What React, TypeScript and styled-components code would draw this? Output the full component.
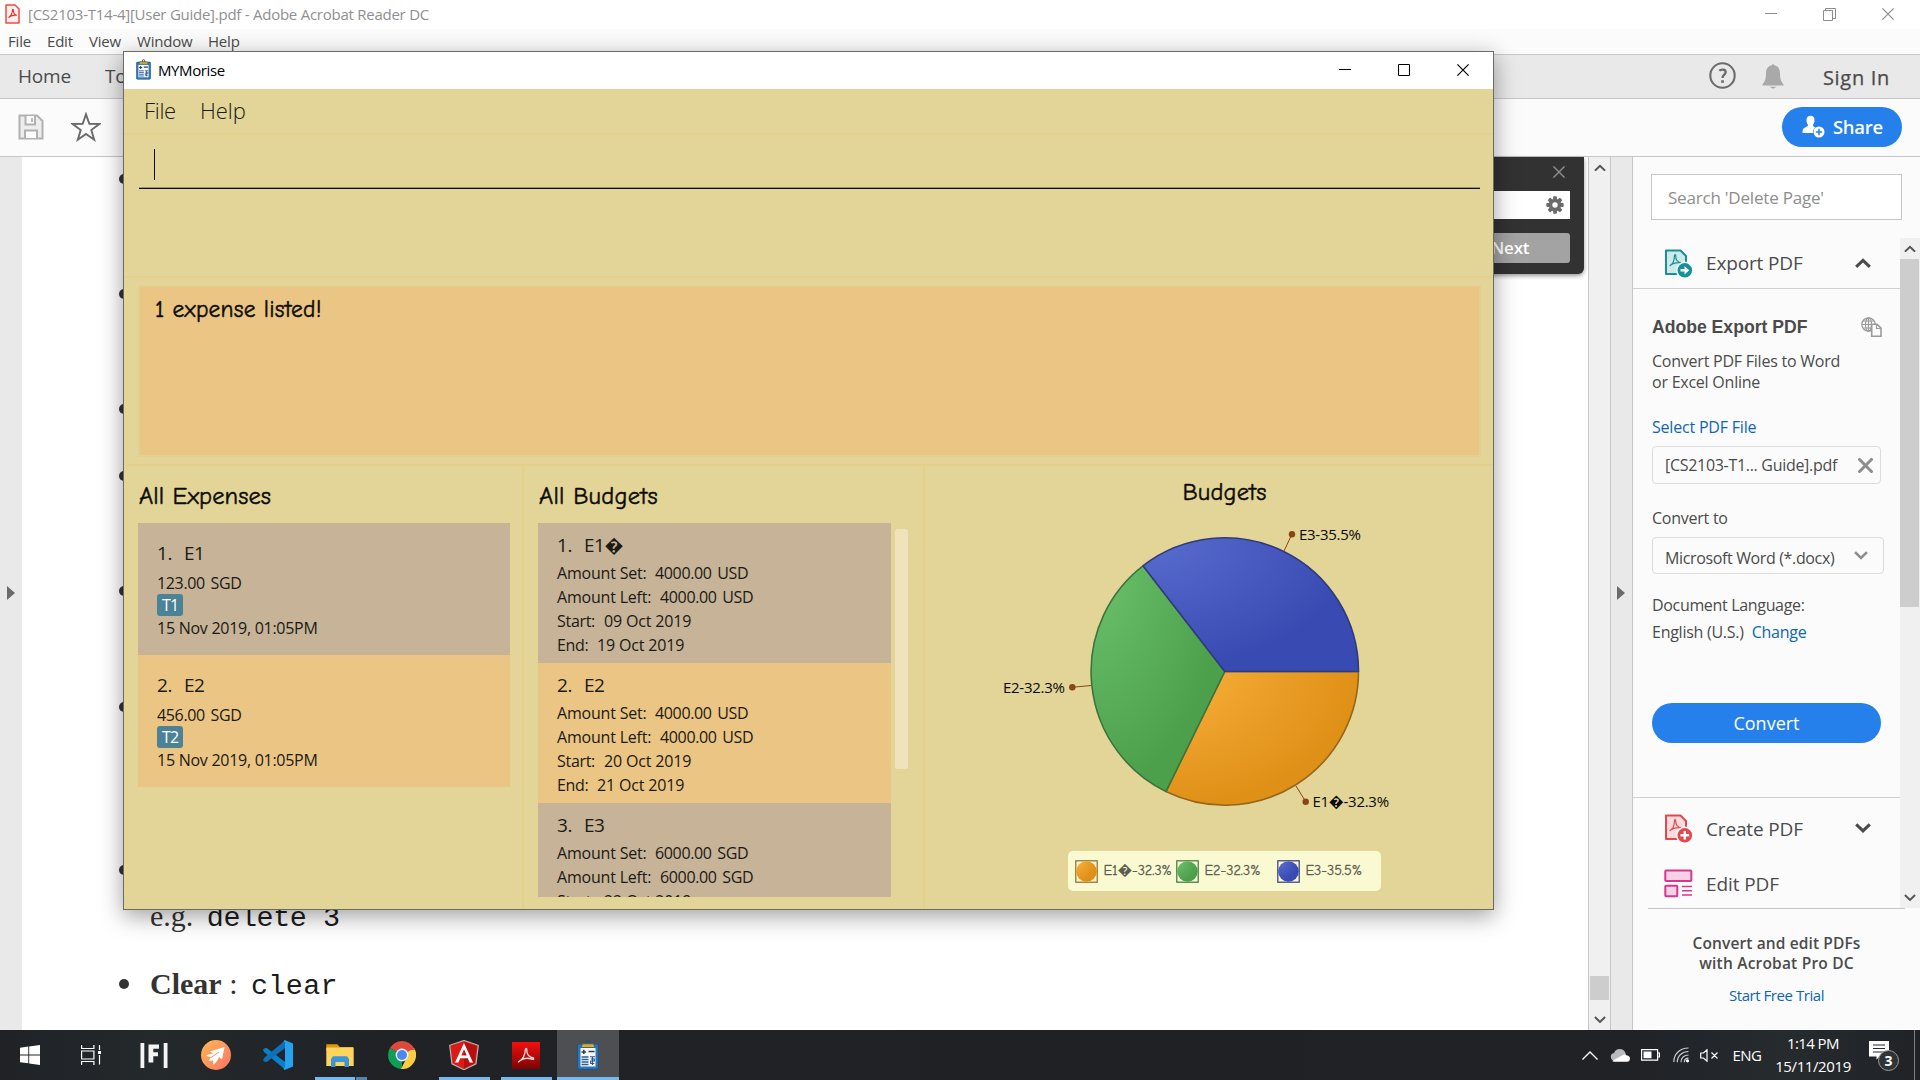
import React from 'react';
import styled, { createGlobalStyle } from 'styled-components';

const UI = '"Open Sans", "Segoe UI", "Noto Sans", sans-serif';
const COMIC = '"Comic Neue", "Comic Sans MS", "Open Sans", sans-serif';

const Global = createGlobalStyle`
  * { box-sizing: border-box; }
  html, body { margin: 0; padding: 0; overflow: hidden; }
  body { font-family: ${UI}; color: #4b4b4b; }
  svg { display: block; flex: none; }
  p, h2, h3, ul { margin: 0; padding: 0; font-weight: 400; }
`;

const Screen = styled.div`
  position: relative;
  display: flex;
  flex-direction: column;
  width: 1920px;
  height: 1080px;
  overflow: hidden;
  background: #fff;
`;

const Label = styled.span<{ $size?: number; $track?: number; $weight?: number; $color?: string; $width?: number; $word?: number }>`
  display: block;
  flex: none;
  white-space: pre;
  font-size: ${p => p.$size ?? 15}px;
  letter-spacing: ${p => p.$track ?? -0.2}px;
  word-spacing: ${p => p.$word ?? 0}px;
  font-weight: ${p => p.$weight ?? 400};
  color: ${p => p.$color ?? 'inherit'};
  width: ${p => (p.$width ? `${p.$width}px` : 'auto')};
`;

/* ---------- Acrobat Reader ---------- */

const ReaderTitle = styled.header`
  display: flex;
  align-items: center;
  flex: none;
  height: 29px;
  padding: 0 26px 1px 5px;
  line-height: 29px;
`;
const TitleText = styled.div`
  margin-left: 8px;
  flex: 1;
`;
const Controls = styled.div<{ $gap: number }>`
  display: flex;
  align-items: center;
  gap: ${p => p.$gap}px;
`;
const ReaderMenu = styled.nav`
  display: flex;
  flex: none;
  height: 26px;
  padding-left: 8px;
  line-height: 25px;
  background: #fbfbfb;
  border-bottom: 1px solid #c6c6c6;
`;
const TabStrip = styled.div`
  display: flex;
  align-items: center;
  height: 44px;
  flex: none;
  padding: 0 30px 2px 18px;
  line-height: 42px;
  background: #e9e9e9;
  border-bottom: 1px solid #c6c6c6;
`;
const Spacer = styled.div`
  flex: 1;
`;
const TabIcons = styled.div`
  display: flex;
  align-items: center;
  gap: 26px;
  margin-right: 39px;
`;
const SignIn = styled.div`
  padding-top: 4px;
  -webkit-text-stroke: 0.25px #4b4b4b;
`;
const ToolStrip = styled.div`
  display: flex;
  align-items: center;
  gap: 27px;
  height: 58px;
  flex: none;
  padding: 0 18px 2px 18px;
  background: #fbfbfb;
  border-bottom: 1px solid #c6c6c6;
`;
const ShareButton = styled.button`
  display: flex;
  align-items: center;
  gap: 8px;
  width: 120px;
  height: 40px;
  padding: 0 0 0 20px;
  border: 0;
  border-radius: 20px;
  background: #2680eb;
  color: #fff;
  font-family: ${UI};
`;

const ReaderBody = styled.main`
  display: flex;
  height: 873px;
  flex: none;
`;
const LeftStrip = styled.aside`
  display: flex;
  align-items: center;
  width: 22px;
  padding: 0 0 1px 7px;
  background: #e9e9e9;
`;
const RightStrip = styled(LeftStrip)`
  width: 22px;
  padding-left: 6px;
  border-left: 1px solid #c6c6c6;
`;
const Page = styled.section`
  flex: 1;
  background: #fff;
`;
const List = styled.ul`
  padding: 4px 0 0 97px;
  list-style: none;
`;
const Item = styled.li<{ $height: number }>`
  display: flex;
  gap: 21px;
  height: ${p => p.$height}px;
  font: 30px/36px "Liberation Serif", "Times New Roman", serif;
  color: #333;
`;
const Bullet = styled.i`
  flex: none;
  width: 10px;
  height: 10px;
  margin-top: 13px;
  border-radius: 50%;
  background: #333;
`;
const Line = styled.p`
  height: 36px;
  white-space: pre;
  margin-bottom: 10px;
`;
const Code = styled.code<{ $track: number }>`
  margin-left: 6px;
  font: 28.4px/36px "Liberation Mono", "Courier New", monospace;
  letter-spacing: ${p => p.$track}px;
  color: #1c1c1c;
`;

const Scroll = styled.div<{ $width: number; $edge?: boolean }>`
  display: flex;
  flex-direction: column;
  align-items: flex-start;
  flex: none;
  width: ${p => p.$width}px;
  padding-left: ${p => (p.$edge ? '1px' : '0')};
  background: #f0f0f0;
  border-left: ${p => (p.$edge ? '1px solid #c6c6c6' : '0')};
`;
const ScrollArrow = styled.div`
  display: grid;
  place-items: center;
  height: 21px;
  width: 19px;
`;
const Thumb = styled.div<{ $top: number; $height: number }>`
  width: 19px;
  height: ${p => p.$height}px;
  margin-top: ${p => p.$top}px;
  background: #cdcdcd;
`;

const FindBar = styled.div`
  position: absolute;
  left: 1300px;
  top: 157px;
  display: flex;
  flex-direction: column;
  width: 284px;
  height: 117px;
  padding: 8px 14px 11px;
  background: #323232;
  border-radius: 0 0 6px 6px;
  box-shadow: 0 2px 4px rgba(0, 0, 0, 0.4);
`;
const FindTop = styled.div`
  display: flex;
  justify-content: flex-end;
  padding: 1px 5px 0 0;
  height: 26px;
`;
const FindInput = styled.div`
  display: flex;
  align-items: center;
  justify-content: flex-end;
  height: 28px;
  padding-right: 6px;
  background: #fff;
`;
const FindNext = styled.div`
  align-self: flex-end;
  width: 104px;
  height: 30px;
  margin-top: 14px;
  padding-left: 25px;
  line-height: 30px;
  border-radius: 3px;
  background: #a3a3a3;
  color: #fff;
`;

/* ---------- Tools pane ---------- */

const Pane = styled.aside`
  display: flex;
  flex-direction: column;
  width: 288px;
  background: #fbfbfb;
  border-left: 1px solid #c6c6c6;
`;
const Search = styled.div`
  flex: none;
  width: 251px;
  height: 46px;
  margin: 17px 0 18px 18px;
  padding-left: 16px;
  line-height: 46px;
  background: #fff;
  border: 1px solid #c6c6c6;
`;
const PaneScroller = styled.div`
  display: flex;
  height: 670px;
  flex: none;
`;
const PaneContent = styled.div`
  flex: 1;
  min-width: 0;
  display: flex;
  flex-direction: column;
`;
const ToolRow = styled.div<{ $height: number; $line?: boolean }>`
  display: flex;
  align-items: center;
  flex: none;
  height: ${p => p.$height}px;
  padding: 0 29px 0 31px;
  border-bottom: ${p => (p.$line ? '1px solid #d0d0d0' : '0')};
`;
const ToolName = styled.div`
  flex: 1;
  margin-left: 13px;
`;
const ExportForm = styled.div`
  display: flex;
  flex-direction: column;
  height: 510px;
  padding: 26px 16px 0 19px;
  line-height: 21px;
  border-bottom: 1px solid #d0d0d0;
`;
const Heading = styled.h3`
  display: flex;
  justify-content: space-between;
  align-items: center;
  height: 24px;
  margin-bottom: 12px;
  padding-right: 2px;
  font: 700 17.6px/24px "Liberation Sans", Arial, sans-serif;
`;
const Block = styled.div<{ $after: number }>`
  display: flex;
  gap: 8px;
  margin-bottom: ${p => p.$after}px;
`;
const Field = styled.div<{ $width: number; $height: number; $after: number; $drop?: number; $right?: number }>`
  display: flex;
  align-items: center;
  justify-content: space-between;
  flex: none;
  width: ${p => p.$width}px;
  height: ${p => p.$height}px;
  margin-bottom: ${p => p.$after}px;
  padding: 0 ${p => p.$right ?? 7}px 0 12px;
  border: 1px solid #dcdcdc;
  border-radius: 4px;
  > span { padding-top: ${p => p.$drop ?? 0}px; }
`;
const FormLine = styled(Block)<{ $before: number }>`
  margin-top: ${p => p.$before}px;
`;
const ConvertButton = styled.button`
  flex: none;
  width: 229px;
  height: 40px;
  padding: 0;
  margin-top: 60px;
  border: 0;
  border-radius: 20px;
  background: #2680eb;
  color: #fff;
  font: 18px/38px ${UI};
`;
const Promo = styled.footer`
  width: 257px;
  margin-left: 15px;
  padding: 24px 0 0 0;
  border-top: 1px solid #c6c6c6;
  text-align: center;
  line-height: 20px;
`;
const Trial = styled.div`
  margin-top: 12px;
`;

/* ---------- MYMorise window ---------- */

const AppWindow = styled.section`
  position: absolute;
  left: 123px;
  top: 51px;
  display: flex;
  flex-direction: column;
  width: 1371px;
  height: 859px;
  border: 1px solid #6b6a64;
  background: #e2d597;
  color: #1c1a14;
  box-shadow: 0 6px 22px rgba(0, 0, 0, 0.38);
`;
const AppTitle = styled.header`
  display: flex;
  align-items: center;
  flex: none;
  height: 37px;
  padding: 0 24px 2px 12px;
  line-height: 37px;
  background: #fff;
  color: #000;
`;
const AppName = styled.div`
  flex: 1;
  margin-left: 7px;
  padding-top: 1px;
`;
const AppMenu = styled.nav`
  display: flex;
  gap: 24px;
  flex: none;
  height: 46px;
  padding-left: 20px;
  line-height: 43px;
  border-bottom: 2px solid #e3d28b;
`;
const CommandArea = styled.div`
  flex: none;
  height: 143px;
  padding: 0 13px 0 15px;
  border-bottom: 2px solid #e3d08a;
`;
const CommandField = styled.div`
  height: 54px;
  padding: 14px 0 0 15px;
  border-bottom: 1px solid #0c0b06;
  box-shadow: inset 0 -1px 0 #9f9763;
`;
const Caret = styled.i`
  display: block;
  width: 1px;
  height: 31px;
  background: #111;
`;
const ResultArea = styled.div`
  flex: none;
  height: 188px;
  padding: 7px 12px 7px 14px;
  border-bottom: 2px solid #e3d08a;
`;
const ResultBox = styled.div`
  height: 172px;
  padding: 4px 0 0 14px;
  border: 2px solid #e3d090;
  background: #ebc583;
`;
const Comic = styled.h2<{ $size: number; $track: number }>`
  padding-left: 1px;
  font: 400 ${p => p.$size}px/38px ${COMIC};
  letter-spacing: ${p => p.$track}px;
  white-space: pre;
  color: #0c0b08;
  -webkit-text-stroke: 0.45px #0c0b08;
`;
const Columns = styled.div`
  display: flex;
  flex: 1;
  min-height: 0;
`;
const Column = styled.div<{ $width: number }>`
  display: flex;
  flex-direction: column;
  flex: none;
  width: ${p => p.$width}px;
  padding: 0 12px 12px 14px;
  border-right: 2px solid #e3d08a;
`;
const ColumnHead = styled.div`
  flex: none;
  height: 57px;
  padding-top: 11px;
`;
const CardScroller = styled.div`
  display: flex;
  flex: 1;
  min-height: 0;
  overflow: hidden;
`;
const Cards = styled.div<{ $width: number }>`
  flex: none;
  width: ${p => p.$width}px;
`;
const Card = styled.article<{ $even?: boolean; $height: number; $top: number }>`
  height: ${p => p.$height}px;
  padding: ${p => p.$top}px 0 0 19px;
  background: ${p => (p.$even ? '#ebc583' : '#c6b398')};
`;
const CardTitle = styled.div<{ $after: number }>`
  display: flex;
  height: 26px;
  line-height: 26px;
  margin-bottom: ${p => p.$after}px;
`;
const CardLine = styled.div`
  display: flex;
  height: 24px;
  line-height: 24px;
`;
const Tag = styled.div`
  width: max-content;
  height: 22px;
  margin-top: -1px;
  padding: 0 5px;
  line-height: 22px;
  border-radius: 3px;
  background: #4c8295;
  color: #fff;
`;
const CardThumb = styled.div`
  flex: none;
  width: 13px;
  height: 240px;
  margin: 6px 0 0 4px;
  border-radius: 3px;
  background: #eee3ba;
`;
const ChartColumn = styled.div`
  display: flex;
  flex-direction: column;
  align-items: center;
  flex: 1;
  padding: 7px 0 0 30px;
`;
const ChartSpace = styled.div`
  padding: 4px 0 6px;
`;
const Legend = styled.div`
  display: flex;
  align-items: center;
  width: 313px;
  height: 40px;
  padding-left: 7px;
  border-radius: 5px;
  background: #fafad2;
`;
const LegendItem = styled.div`
  display: flex;
  align-items: center;
  gap: 6px;
  width: 101px;
`;
const LegendText = styled.span`
  font: 400 14.3px/20px ${COMIC};
  letter-spacing: -0.05px;
  white-space: pre;
  color: #5d5c50;
  -webkit-text-stroke: 0.3px #5d5c50;
`;
const ChartLabel = styled.text`
  font: 15px ${UI};
  letter-spacing: -0.28px;
  fill: #0a0a0a;
`;

/* ---------- Taskbar ---------- */

const Taskbar = styled.footer`
  display: flex;
  flex: none;
  height: 50px;
  background: linear-gradient(90deg, #202226, #24292c 8%, #202226 20%, #1f2125 60%, #202226 85%, #262b2e 93%, #202226);
  color: #fff;
`;
const Launcher = styled.div<{ $width?: number; $active?: boolean; $bar?: number; $extra?: boolean }>`
  display: grid;
  place-items: center;
  width: ${p => p.$width ?? 62}px;
  background-color: ${p => (p.$active ? '#4e4f53' : 'transparent')};
  background-image: ${p =>
    p.$bar
      ? `linear-gradient(#76b9ed, #76b9ed)${p.$extra ? ', linear-gradient(#5186ae, #5186ae)' : ''}`
      : 'none'};
  background-size: ${p => p.$bar}px 3px${p => (p.$extra ? ', 11px 3px' : '')};
  background-position: ${p => (p.$extra ? '6px 100%, 47px 100%' : '50% 100%')};
  background-repeat: no-repeat;
`;
const Tray = styled.div`
  display: flex;
  align-items: center;
  margin-left: auto;
  padding-right: 5px;
`;
const TrayCell = styled.div<{ $width: number }>`
  display: grid;
  place-items: center;
  width: ${p => p.$width}px;
`;
const Clock = styled.div`
  display: flex;
  flex-direction: column;
  align-items: center;
  width: 82px;
  line-height: 23px;
`;
const ShowDesktop = styled.div`
  width: 1px;
  height: 50px;
  background: #7c7e80;
`;

/* ---------- Icons ---------- */

const Close = ({ s = 12, c = '#000', w = 1.2 }: { s?: number; c?: string; w?: number }) => (
  <svg width={s} height={s} viewBox="0 0 12 12"><path d="M.4.4 11.6 11.6M11.6.4.4 11.6" stroke={c} strokeWidth={w} fill="none" /></svg>
);
const Minimize = ({ c }: { c: string }) => (
  <svg width="12" height="12"><path d="M0 5.5h12" stroke={c} /></svg>
);
const Chevron = ({ up, w = 16, s = 3, c = '#4b4b4b' }: { up?: boolean; w?: number; s?: number; c?: string }) => (
  <svg width={w} height={w * 0.64} viewBox="0 0 16 10"><path d={up ? 'M1.2 8.8 8 2.2l6.8 6.6' : 'M1.2 1.2 8 7.8l6.8-6.6'} stroke={c} strokeWidth={s} fill="none" /></svg>
);
const Triangle = () => (
  <svg width="9" height="14"><path d="M0 0 8 7 0 14z" fill="#6b6b6b" /></svg>
);
const Trefoil = 'M6.5 16.5c3-1.3 4.700-5.800 4.800-10.200 0-1.300 1.300-1.200 1.200 0-.2 3.800 2.200 6.700 6 7.300-4.600-.6-9 .4-12 2.900z';
const PdfIcon = () => (
  <svg width="15" height="20" viewBox="0 0 15 20">
    <path d="M1 1h9l4 4v14H1z" fill="#fff0ef" stroke="#f04a45" strokeWidth="1.5" strokeLinejoin="round" />
    <path d="M3.500 13.500c2-.8 4-4.500 4-7.500 0-.9.900-.9.800 0 0 2.600 1.400 4.800 3.600 5.200-3-.3-6 .4-8.400 2.300z" fill="none" stroke="#e8332d" strokeWidth="1.1" />
  </svg>
);
const Clipboard = ({ w, h }: { w: number; h: number }) => (
  <svg width={w} height={h} viewBox="0 0 22 30">
    <rect x=".6" y="4" width="20.800" height="25.400" rx="1.800" fill="#2a76b8" stroke="#1c4f80" strokeWidth=".8" />
    <rect x="3.500" y="8" width="15" height="18.500" fill="#f6f8fa" />
    <circle cx="11" cy="2.600" r="1.900" fill="none" stroke="#26506f" strokeWidth="1.400" />
    <path d="M5.500 3.800h11l1.500 3.700H4z" fill="#d9ad2b" stroke="#355d6e" strokeWidth=".8" />
    <path d="M4.500 12h4.600M6.800 9.800v4.300M11.500 11.500h6" stroke="#22416a" strokeWidth="1.500" />
    <path d="M4.500 17h7M4.500 19.500h7M4.500 22h7M4.500 24.500h7" stroke="#2f5f94" strokeWidth="1.300" />
    <path d="M13 16.700h5M15.500 17v8M13.700 19h3.600v2h-3.600v2.500h3.600" stroke="#2b5588" strokeWidth="1.100" fill="none" />
  </svg>
);
const SaveIcon = () => (
  <svg width="26" height="26" viewBox="0 0 26 26" fill="none" stroke="#b1b1b1" strokeWidth="2">
    <path d="M1.500 1.500h17.500l5.500 5.500v17.500h-23z" fill="#ededed" />
    <path d="M7.500 2v8.500h9.500V2" fill="#fbfbfb" /><path d="M14 4v4" strokeWidth="1.800" />
    <path d="M7 24v-7.500h12V24" fill="#fbfbfb" />
  </svg>
);
const StarIcon = () => (
  <svg width="30" height="30" viewBox="0 0 30 30"><path d="M15 2.200l3.300 9.600 10 .2-8 6.100 2.900 9.600-8.200-5.700-8.200 5.700 2.900-9.600-8-6.100 10-.2z" fill="none" stroke="#6b6b6b" strokeWidth="1.900" /></svg>
);
const HelpIcon = () => (
  <svg width="27" height="27" viewBox="0 0 27 27" fill="none" stroke="#6b6b6b">
    <circle cx="13.500" cy="13.500" r="12.200" strokeWidth="2.100" />
    <path d="M10.300 8.800c1.500-1.700 6.400-1.800 6.400 1.300 0 2.500-3.200 2.500-3.200 5.900" strokeWidth="2.300" /><path d="M12.200 18.300h2.700v2.500h-2.700z" fill="#6b6b6b" stroke="none" />
  </svg>
);
const BellIcon = () => (
  <svg width="22" height="26" viewBox="0 0 22 26" fill="#a9a9a9"><path d="M9.600 2.200a1.500 1.500 0 0 1 2.800 0c4 1 5.600 4 5.600 8 0 6 1 8 3.500 11v1.300H.5v-1.300c2.500-3 3.500-5 3.500-11 0-4 1.600-7 5.600-8zM7.500 23.700h7L11 25.800z" /></svg>
);
const ShareIcon = () => (
  <svg width="23" height="23" viewBox="0 0 23 23">
    <path d="M8.500.8c2.800 0 4 1.800 4 4.400 0 2-.7 3.400-1.500 4.600 0 1.600.6 2 2.500 2.900-2 1.300-2.600 2.600-2.600 5.300H.5c0-3.500.5-4.700 2.500-5.500 2.500-1 3-1.200 3-2.700C5.200 8.600 4.500 7.200 4.500 5.200 4.500 2.600 5.700.8 8.500.8z" fill="#fff" />
    <circle cx="17" cy="17" r="5.500" fill="#fff" /><path d="M17 13.800v6.400M13.800 17h6.400" stroke="#2680eb" strokeWidth="1.500" />
  </svg>
);
const Gear = () => (
  <svg width="18" height="18" viewBox="-9 -9 18 18">
    <g fill="#6b6b6b">{[0, 45, 90, 135].map(a => <rect key={a} x="-1.900" y="-8.700" width="3.800" height="17.400" rx=".8" transform={`rotate(${a})`} />)}<circle r="6.300" /></g>
    <circle r="2.700" fill="#fff" />
  </svg>
);
const PdfTool = ({ c, f, plus }: { c: string; f: string; plus?: boolean }) => (
  <svg width="29" height="29" viewBox="0 0 29 29">
    <path d="M2 1.500h14.500L22 7v18H2z" fill={f} stroke={c} strokeWidth="2" strokeLinejoin="round" />
    <path d={Trefoil} transform="translate(-.8 .3)" fill="none" stroke={c} strokeWidth="1.200" />
    <circle cx="20.800" cy="21.300" r="8" fill={c} stroke="#fbfbfb" strokeWidth="1.400" />
    {plus ? <path d="M20.800 17v8.600M16.500 21.300h8.600" stroke="#fff" strokeWidth="2.400" /> : <path d="M16.500 20h4v-2.800l4.800 4.100-4.800 4.100v-2.800h-4z" fill="#fff" />}
  </svg>
);
const EditTool = () => (
  <svg width="29" height="29" viewBox="0 0 29 29" stroke="#d83790" fill="#f6d2e6" strokeWidth="2">
    <rect x="1.300" y="1.500" width="26" height="10.500" rx=".8" /><rect x="1.300" y="16.800" width="12" height="10.500" rx=".8" />
    <path d="M18 17.500h10M18 21.800h10M18 26h10" strokeWidth="1.400" />
  </svg>
);
const GlobePage = () => (
  <svg width="21" height="20" viewBox="0 0 21 20" fill="none" stroke="#9a9a9a" strokeWidth="1.200">
    <circle cx="7.500" cy="7.500" r="6.700" /><ellipse cx="7.500" cy="7.500" rx="3" ry="6.700" /><path d="M7.500.8v13.400M.8 7.500h13.400M2 4h11M2 11h11" />
    <path d="M10.700 7.200h5.300l4 4v8h-9.300z" fill="#fbfbfb" strokeWidth="1.600" /><path d="M15.500 7.500v4h4.300" />
  </svg>
);

/* ---------- Data ---------- */

const expenses = [
  { n: '1.', name: 'E1', amount: '123.00 SGD', tag: 'T1' },
  { n: '2.', name: 'E2', amount: '456.00 SGD', tag: 'T2' },
];
const budgets = [
  { n: '1.', name: 'E1\uFFFD', amount: '4000.00 USD', start: '09 Oct 2019', end: '19 Oct 2019' },
  { n: '2.', name: 'E2', amount: '4000.00 USD', start: '20 Oct 2019', end: '21 Oct 2019' },
  { n: '3.', name: 'E3', amount: '6000.00 SGD', start: '22 Oct 2019', end: '' },
];
const slices = [
  { id: 'e1', label: 'E1\uFFFD-32.3%', share: 10 / 31, light: '#fab13d', dark: '#df9017', edge: '#96661c' },
  { id: 'e2', label: 'E2-32.3%', share: 10 / 31, light: '#6dc26d', dark: '#4ca04b', edge: '#3c743a' },
  { id: 'e3', label: 'E3-35.5%', share: 11 / 31, light: '#5a6dd0', dark: '#394bb2', edge: '#303b7c' },
];
const bullets = [115, 115, 67, 115, 116, 163];

const CX = 1224.8;
const CY = 671.5;
const R = 133.7;

function Pie() {
  let a = 0;
  return (
    <svg width="537" height="330" viewBox="956 515 537 330">
      <defs>
        {slices.map(s => (
          <radialGradient key={s.id} id={s.id} cx="0" cy="0" r="1" fx="0" fy="0">
            <stop offset="0" stopColor={s.light} /><stop offset="1" stopColor={s.dark} />
          </radialGradient>
        ))}
      </defs>
      {slices.map(s => {
        const b = a + s.share * Math.PI * 2;
        const d = `M${CX} ${CY}L${CX + R * Math.cos(a)} ${CY + R * Math.sin(a)}A${R} ${R} 0 0 1 ${CX + R * Math.cos(b)} ${CY + R * Math.sin(b)}Z`;
        a = b;
        return <path key={s.id} d={d} fill={`url(#${s.id})`} stroke={s.edge} strokeWidth="1.600" strokeLinejoin="round" />;
      })}
      <g stroke="#8b4513" fill="#8b4513">
        <path d="M1284 551l8-17M1091 685.500l-19 1.800M1296 786l9.700 15.700" />
        <g stroke="none"><circle cx="1292" cy="534.300" r="3.200" /><circle cx="1072.300" cy="687.300" r="3.200" /><circle cx="1305.700" cy="801.700" r="3.200" /></g>
      </g>
      <ChartLabel x="1299" y="540">E3-35.5%</ChartLabel>
      <ChartLabel x="1003" y="693">E2-32.3%</ChartLabel>
      <ChartLabel x="1312.500" y="807">{'E1\uFFFD-32.3%'}</ChartLabel>
    </svg>
  );
}

export default function App() {
  return (
    <Screen>
      <Global />
      <ReaderTitle>
        <PdfIcon />
        <TitleText><Label $track={-0.25} $color="#8f8f8f">[CS2103-T14-4][User Guide].pdf - Adobe Acrobat Reader DC</Label></TitleText>
        <Controls $gap={46}>
          <Minimize c="#8c8c8c" />
          <svg width="13" height="13" fill="none" stroke="#8c8c8c"><path d="M.5 2.500h9v10h-9zM2.500 2.500v-2h10v10h-3" /></svg>
          <Close c="#8c8c8c" />
        </Controls>
      </ReaderTitle>
      <ReaderMenu>
        <Label $width={39}>File</Label><Label $width={42}>Edit</Label><Label $width={48}>View</Label><Label $width={71}>Window</Label><Label>Help</Label>
      </ReaderMenu>
      <TabStrip>
        <Label $size={19} $width={87}>Home</Label><Label $size={19}>To</Label>
        <Spacer />
        <TabIcons><HelpIcon /><BellIcon /></TabIcons>
        <SignIn><Label $size={20} $track={0.7}>Sign In</Label></SignIn>
      </TabStrip>
      <ToolStrip>
        <SaveIcon /><StarIcon />
        <Spacer />
        <ShareButton><ShareIcon /><Label $size={18.5} $track={-0.3} $weight={600}>Share</Label></ShareButton>
      </ToolStrip>

      <ReaderBody>
        <LeftStrip><Triangle /></LeftStrip>
        <Page>
          <List>
            {bullets.map((h, i) => <Item key={i} $height={h}><Bullet /></Item>)}
            <Item $height={114}>
              <Bullet />
              <div><Line /><Line>e.g. <Code $track={-0.45}>delete 3</Code></Line></div>
            </Item>
            <Item $height={50}>
              <Bullet />
              <Line><b>Clear</b> : <Code $track={0.35}>clear</Code></Line>
            </Item>
          </List>
        </Page>
        <Scroll $width={22} $edge>
          <ScrollArrow><Chevron up w={12} s={2.6} c="#555" /></ScrollArrow>
          <Thumb $top={798} $height={24} />
          <Spacer />
          <ScrollArrow><Chevron w={12} s={2.6} c="#555" /></ScrollArrow>
        </Scroll>
        <RightStrip><Triangle /></RightStrip>
        <Pane>
          <Search><Label $size={17} $track={-0.2} $color="#8e8e8e">Search 'Delete Page'</Label></Search>
          <PaneScroller>
            <PaneContent>
              <ToolRow $height={51} $line>
                <PdfTool c="#14919b" f="#cfe9e9" />
                <ToolName><Label $size={19} $track={-0.15}>Export PDF</Label></ToolName>
                <Chevron up />
              </ToolRow>
              <ExportForm>
                <Heading>Adobe Export PDF<GlobePage /></Heading>
                <Block $after={24}><Label $size={16} $track={-0.23}>{'Convert PDF Files to Word\nor Excel Online'}</Label></Block>
                <Block $after={8}><Label $size={16} $track={-0.2} $color="#0d66b0">Select PDF File</Label></Block>
                <Field $width={229} $height={38} $after={0}>
                  <Label $size={16} $track={-0.3}>[CS2103-T1... Guide].pdf</Label><Close s={15} c="#8e8e8e" w={2.4} />
                </Field>
                <FormLine $before={24} $after={8}><Label $size={16} $track={-0.25}>Convert to</Label></FormLine>
                <Field $width={232} $height={37} $after={0} $drop={6} $right={15}>
                  <Label $size={16} $track={-0.36}>Microsoft Word (*.docx)</Label><Chevron w={14} c="#8e8e8e" />
                </Field>
                <FormLine $before={21} $after={6}><Label $size={16} $track={-0.33}>Document Language:</Label></FormLine>
                <Block $after={0}>
                  <Label $size={16} $track={-0.26}>English (U.S.)</Label><Label $size={16} $track={-0.25} $color="#0d66b0">Change</Label>
                </Block>
                <ConvertButton>Convert</ConvertButton>
              </ExportForm>
              <ToolRow $height={61}>
                <PdfTool c="#e34850" f="#fadcdd" plus />
                <ToolName><Label $size={19} $track={-0.15}>Create PDF</Label></ToolName>
                <Chevron />
              </ToolRow>
              <ToolRow $height={49}>
                <EditTool />
                <ToolName><Label $size={19} $track={-0.1}>Edit PDF</Label></ToolName>
              </ToolRow>
            </PaneContent>
            <Scroll $width={20}>
              <ScrollArrow><Chevron up w={12} s={2.6} c="#555" /></ScrollArrow>
              <Thumb $top={0} $height={348} />
              <Spacer />
              <ScrollArrow><Chevron w={12} s={2.6} c="#555" /></ScrollArrow>
            </Scroll>
          </PaneScroller>
          <Promo>
            <Label $size={15.5} $track={0.12} $weight={600}>Convert and edit PDFs</Label>
            <Label $size={15.5} $track={0.2} $weight={600}>with Acrobat Pro DC</Label>
            <Trial><Label $size={15} $track={-0.45} $color="#0d66b0">Start Free Trial</Label></Trial>
          </Promo>
        </Pane>
      </ReaderBody>

      <FindBar>
        <FindTop><Close s={12} c="#8a8a8a" w={1.5} /></FindTop>
        <FindInput><Gear /></FindInput>
        <FindNext><Label $size={17} $track={-0.2} $weight={600}>Next</Label></FindNext>
      </FindBar>

      <AppWindow>
        <AppTitle>
          <Clipboard w={15} h={21} />
          <AppName><Label $track={-0.4}>MYMorise</Label></AppName>
          <Controls $gap={47}>
            <Minimize c="#000" />
            <svg width="12" height="12"><path d="M.5.5h11v11H.500z" fill="none" stroke="#000" /></svg>
            <Close />
          </Controls>
        </AppTitle>
        <AppMenu>
          <Label $size={22} $weight={300} $track={-0.3}>File</Label><Label $size={22} $weight={300} $track={0}>Help</Label>
        </AppMenu>
        <CommandArea><CommandField><Caret /></CommandField></CommandArea>
        <ResultArea><ResultBox><Comic $size={23.5} $track={0.22}>1 expense listed!</Comic></ResultBox></ResultArea>
        <Columns>
          <Column $width={400}>
            <ColumnHead><Comic $size={24.5} $track={0.1}>All Expenses</Comic></ColumnHead>
            <CardScroller>
              <Cards $width={372}>
                {expenses.map((e, i) => (
                  <Card key={e.n} $height={132} $top={17} $even={i % 2 === 1}>
                    <CardTitle $after={5}><Label $size={19} $track={-0.3} $width={27}>{e.n}</Label><Label $size={19} $track={-0.5}>{e.name}</Label></CardTitle>
                    <CardLine><Label $size={16} $track={-0.35} $word={1.8}>{e.amount}</Label></CardLine>
                    <Tag><Label $size={16} $track={-0.8}>{e.tag}</Label></Tag>
                    <CardLine><Label $size={16} $track={-0.27}>15 Nov 2019, 01:05PM</Label></CardLine>
                  </Card>
                ))}
              </Cards>
            </CardScroller>
          </Column>
          <Column $width={401}>
            <ColumnHead><Comic $size={24.5} $track={0.25}>All Budgets</Comic></ColumnHead>
            <CardScroller>
              <Cards $width={353}>
                {budgets.map((b, i) => (
                  <Card key={b.n} $height={140} $top={9} $even={i % 2 === 1}>
                    <CardTitle $after={3}><Label $size={19} $track={-0.3} $width={27}>{b.n}</Label><Label $size={19} $track={-0.5}>{b.name}</Label></CardTitle>
                    <CardLine><Label $size={16} $width={98}>Amount Set:</Label><Label $size={16} $track={-0.35} $word={1.8}>{b.amount}</Label></CardLine>
                    <CardLine><Label $size={16} $width={103}>Amount Left:</Label><Label $size={16} $track={-0.35} $word={1.8}>{b.amount}</Label></CardLine>
                    <CardLine><Label $size={16} $width={47} $track={-0.3}>Start:</Label><Label $size={16} $track={-0.15}>{b.start}</Label></CardLine>
                    {b.end && <CardLine><Label $size={16} $width={40} $track={-0.3}>End:</Label><Label $size={16} $track={-0.15}>{b.end}</Label></CardLine>}
                  </Card>
                ))}
              </Cards>
              <CardThumb />
            </CardScroller>
          </Column>
          <ChartColumn>
            <Comic $size={24.5} $track={0.15}>Budgets</Comic>
            <ChartSpace><Pie /></ChartSpace>
            <Legend>
              {slices.map(s => (
                <LegendItem key={s.id}>
                  <svg width="23" height="23"><rect x=".8" y=".8" width="21.400" height="21.400" fill="#fbf7d4" stroke={s.edge} strokeWidth="1.200" /><circle cx="11.500" cy="11.500" r="10.300" fill={`url(#${s.id})`} /></svg>
                  <LegendText>{s.label}</LegendText>
                </LegendItem>
              ))}
            </Legend>
          </ChartColumn>
        </Columns>
      </AppWindow>

      <Taskbar>
        <Launcher $width={60}>
          <svg width="20" height="20" viewBox="0 0 20 20" fill="#fff"><path d="M0 2.800 8.300 1.600v7.900H0zM9.200 1.500 20 0v9.500H9.200zM0 10.400h8.300v7.900L0 17.200zM9.200 10.400H20V20L9.200 18.500z" /></svg>
        </Launcher>
        <Launcher $width={63}>
          <svg width="21" height="20" viewBox="0 0 21 20" fill="none" stroke="#fff" strokeWidth="1.200"><path d="M.6 0v3.500h12.300V0M.6 20v-3.500h12.300V20M.6 6h12.300v8H.6zM18.500 0v5M18.500 10v9.500" /><path d="M17 6h3v3h-3z" fill="#fff" stroke="none" /></svg>
        </Launcher>
        <Launcher>
          <svg width="28" height="27" viewBox="0 0 28 27" fill="#f4f4f4"><path d="M.5 1h3.800v25H.5zM23.700 1h3.800v25h-3.800zM8.500 2.500h10.500v4.200h-5.700v3.600h4.700v4h-4.700v6.200H8.500z" /></svg>
        </Launcher>
        <Launcher>
          <svg width="30" height="30" viewBox="0 0 30 30">
            <defs><linearGradient id="sun" x1="0" y1="0" x2="1" y2="1"><stop offset="0" stopColor="#fdbb54" /><stop offset="1" stopColor="#fb7266" /></linearGradient></defs>
            <circle cx="15" cy="15" r="15" fill="url(#sun)" /><path d="M23.500 7 21 19.500l-3-2.500c-1 3-3 5.500-5.500 8l-.5-4.500-4.500.300 2.500-3.500-5-1.500c2.500-1.500 5-2 7.500-2.300L9 11.500z" fill="#fff" /><path d="M10 17.500 18 12" stroke="#fb9160" strokeWidth="1" />
          </svg>
        </Launcher>
        <Launcher>
          <svg width="30" height="30" viewBox="0 0 30 30"><path d="M0 9.600 2.200 8l2 .2L22 22v7.500L1 12z" fill="#0a7fcb" /><path d="M0 20.400 2.200 22l2-.2L22 8V.500L1 18z" fill="#1070b3" /><path d="M21.500 0 30 3.500v23L21.500 30l-1-1.500 1.500-1V2.500l-1.500-1z" fill="#26a3ee" /></svg>
        </Launcher>
        <Launcher $bar={40} $extra>
          <svg width="28" height="23" viewBox="0 0 28 23"><path d="M.3.300h11l2.500 2.700H27v4H.3z" fill="#dd9a07" /><path d="M.3 3.500H27.700V22H.3z" fill="#fdd45e" /><path d="M5 23v-8l2-2.700h14L23 15v8h-4.500v-5h-9v5z" fill="#3d94d8" /></svg>
        </Launcher>
        <Launcher>
          <svg width="28" height="28" viewBox="0 0 28 28"><path d="M14 14 1.900 7A14 14 0 0 1 26.100 7z" fill="#dc4a3d" /><path d="M14 14 14 28A14 14 0 0 1 1.900 7z" fill="#109d58" /><path d="M14 14 26.100 7A14 14 0 0 1 13 28l5-10z" fill="#fdcd41" /><path d="M14 7.500h12.300L27 9H14z" fill="#dc4a3d" /><circle cx="14" cy="14" r="6.400" fill="#f3f3f3" /><circle cx="14" cy="14" r="5" fill="#4888f2" /></svg>
        </Launcher>
        <Launcher $bar={51}>
          <svg width="30" height="30" viewBox="0 0 30 30"><path d="M15 .5 29.300 5.300 27 23.800 15 29.700 3 23.800.7 5.300z" fill="#dd1b16" stroke="#b5b5b5" strokeWidth="1.200" /><path d="M15 2v26.500l10.600-5.500L27.800 6.300z" fill="#b3100f" /><path d="M15 3 6 22.500h3.400l1.800-4.300h7.600l1.800 4.300H24zm0 6.300 2.700 6.200h-5.400z" fill="#fff" /></svg>
        </Launcher>
        <Launcher $bar={51}>
          <svg width="28" height="27" viewBox="0 0 28 27"><defs><linearGradient id="acro" x1="0" y1="0" x2="0" y2="1"><stop offset="0" stopColor="#f50f0f" /><stop offset="1" stopColor="#780404" /></linearGradient></defs><rect width="28" height="27" fill="url(#acro)" /><path d="M7 19.500c3.300-1.300 6.200-6.500 6.300-11.500 0-2 1.700-2 1.500 0-.3 4.500 2.700 7.600 6.700 8 .8 1.700-1 1.700-2.500.9-3.700-1.300-7.500-.6-11 1.700-1.200 1.400-2.300 1.700-1 .9z" fill="none" stroke="#f5d9d9" strokeWidth="1.300" /></svg>
        </Launcher>
        <Launcher $bar={62} $active><Clipboard w={22} h={30} /></Launcher>

        <Tray>
          <TrayCell $width={30}><svg width="16" height="9"><path d="M.5 8.500 8 1l7.500 7.500" fill="none" stroke="#fff" strokeWidth="1.400" /></svg></TrayCell>
          <TrayCell $width={30}><svg width="20" height="13" viewBox="0 0 20 13"><path d="M4 11.500a3.800 3.800 0 0 1 0-7.500A6.200 6.200 0 0 1 15.500 4L17 11z" fill="#b9babb" /><path d="M2 12 12 6.500c1-1 3-1.500 4.500-.3 2.500.2 3.500 2 3.500 3.300 0 2-1.300 3.300-3 3.300H4z" fill="#fff" /></svg></TrayCell>
          <TrayCell $width={31}><svg width="19" height="12"><path d="M.6.600h16v10.500H.600zM17 4h1.500v4H17" fill="none" stroke="#fff" strokeWidth="1.200" /><path d="M2.500 2.500h8v6.700h-8z" fill="#fff" /></svg></TrayCell>
          <TrayCell $width={30}><svg width="17" height="16" fill="none" stroke="#c9cacb" strokeWidth="1.200"><path d="M.8 15C.8 7 7 1 15.500 1M4.300 15.200C4.300 9 9 4.500 15.500 4.500M8 15.200C8 11 11 8 15.500 8" /><path d="M11.300 15.200c0-2.500 1.700-4 4.200-4" /><circle cx="14.500" cy="13.800" r="1.600" fill="#fff" stroke="none" /></svg></TrayCell>
          <TrayCell $width={26}><svg width="19" height="13" fill="none" stroke="#fff" strokeWidth="1.200"><path d="M.7 4h2.800L7 .8v11.400L3.500 9H.700zM11.500 3.500l6 6M17.500 3.500l-6 6" /></svg></TrayCell>
          <TrayCell $width={50}><Label $track={-0.5}>ENG</Label></TrayCell>
          <Clock><Label $track={-0.6}>1:14 PM</Label><Label $track={-0.4}>15/11/2019</Label></Clock>
          <TrayCell $width={60}>
            <svg width="31" height="31" viewBox="0 0 31 31">
              <path d="M0 1h20v15.500H11l-3.500 3v-3H0z" fill="#fff" /><path d="M4 5h12M4 8.500h12M4 12h12" stroke="#26292c" strokeWidth="1.100" />
              <circle cx="19.500" cy="20.500" r="10" fill="#303335" stroke="#9a9b9c" />
              <text x="15.500" y="25.500" fill="#fff" fontSize="14" fontWeight="700">3</text>
            </svg>
          </TrayCell>
          <ShowDesktop />
        </Tray>
      </Taskbar>
    </Screen>
  );
}
